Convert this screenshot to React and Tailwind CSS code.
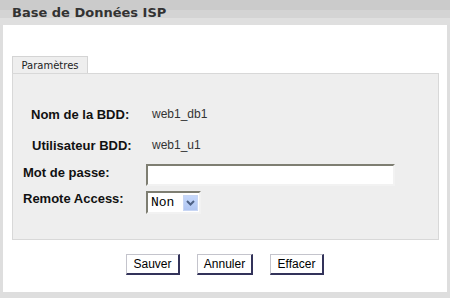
import React from "react";

const labelCls = "font-['Liberation_Sans',Arial,sans-serif] font-bold text-[13px] leading-[15px] text-[#111]";
const valueCls = "font-['Liberation_Sans',Arial,sans-serif] text-[12px] text-[#333]";

const Button = ({ children, width }) => (
  <button
    className={`h-[21px] ${width} bg-white border border-t-[#c4c4cc] border-l-[#c4c4cc] border-r-[#33335a] border-b-[#33335a] border-r-2 border-b-2 font-['Liberation_Sans',Arial,sans-serif] text-[12px] text-black leading-none`}
  >
    {children}
  </button>
);

export default function App() {
  return (
    <div className="w-[450px] h-[298px] bg-[#dedede] flex flex-col">
      {/* Title bar */}
      <div className="h-[25px] shrink-0 bg-[linear-gradient(#cbcbcb_0_10px,#d4d4d4_10px_18px,#dfdfdf_18px)] flex items-center pl-[12px]">
        <span className="font-['DejaVu_Sans',Verdana,sans-serif] font-bold text-[13px] text-[#333]">
          Base de Données ISP
        </span>
      </div>

      {/* Body */}
      <div className="mx-[3px] mb-[6px] flex-1 bg-white pt-[31px] pl-[9px] pr-[8px]">
        {/* Tab */}
        <div className="flex">
          <div className="h-[17px] w-[76px] bg-[#eeeeee] border border-b-0 border-[#d4d4d4] flex items-center justify-center font-['DejaVu_Sans',Verdana,sans-serif] text-[10px] text-[#222]">
            Paramètres
          </div>
        </div>

        {/* Tab panel */}
        <div className="h-[167px] bg-[#eeeeee] border border-[#d8d8d8] pt-[30px]">
          <div className="flex items-center h-[20px] pl-[18px]">
            <span className={`${labelCls} w-[121px]`}>Nom de la BDD:</span>
            <span className={valueCls}>web1_db1</span>
          </div>
          <div className="flex items-center h-[20px] pl-[19px] mt-[11px]">
            <span className={`${labelCls} w-[120px]`}>Utilisateur BDD:</span>
            <span className={valueCls}>web1_u1</span>
          </div>
          <div className="flex items-start h-[21px] pl-[10px] mt-[9px]">
            <span className={`${labelCls} w-[123px] pt-[1px]`}>Mot de passe:</span>
            <div className="w-[249px] h-[22px] bg-white border-2 border-t-[#7e7e72] border-l-[#7e7e72] border-r-[#f2f2f2] border-b-[#f2f2f2]" />
          </div>
          <div className="flex items-start h-[22px] pl-[10px] mt-[6px]">
            <span className={`${labelCls} w-[123px]`}>Remote Access:</span>
            <div className="w-[55px] h-[23px] bg-white border-2 border-t-[#7e7e72] border-l-[#7e7e72] border-r-[#f2f2f2] border-b-[#f2f2f2] flex items-center pl-[3px] pr-[1px]">
              <span className="font-['Liberation_Mono','Courier_New',monospace] text-[13px] text-black flex-1">Non</span>
              <div className="w-[15px] h-[16px] bg-[linear-gradient(#c6d8fb,#b0c6f2)] border border-[#c8d6f4] flex items-center justify-center">
                <svg width="9" height="6" viewBox="0 0 9 6">
                  <path d="M1 1 L4.5 4.5 L8 1" fill="none" stroke="#4d6185" strokeWidth="2" />
                </svg>
              </div>
            </div>
          </div>
        </div>

        {/* Buttons */}
        <div className="flex justify-center gap-[17px] mt-[14px] pr-[1px]">
          <Button width="w-[54px]">Sauver</Button>
          <Button width="w-[56px]">Annuler</Button>
          <Button width="w-[54px]">Effacer</Button>
        </div>
      </div>
    </div>
  );
}
